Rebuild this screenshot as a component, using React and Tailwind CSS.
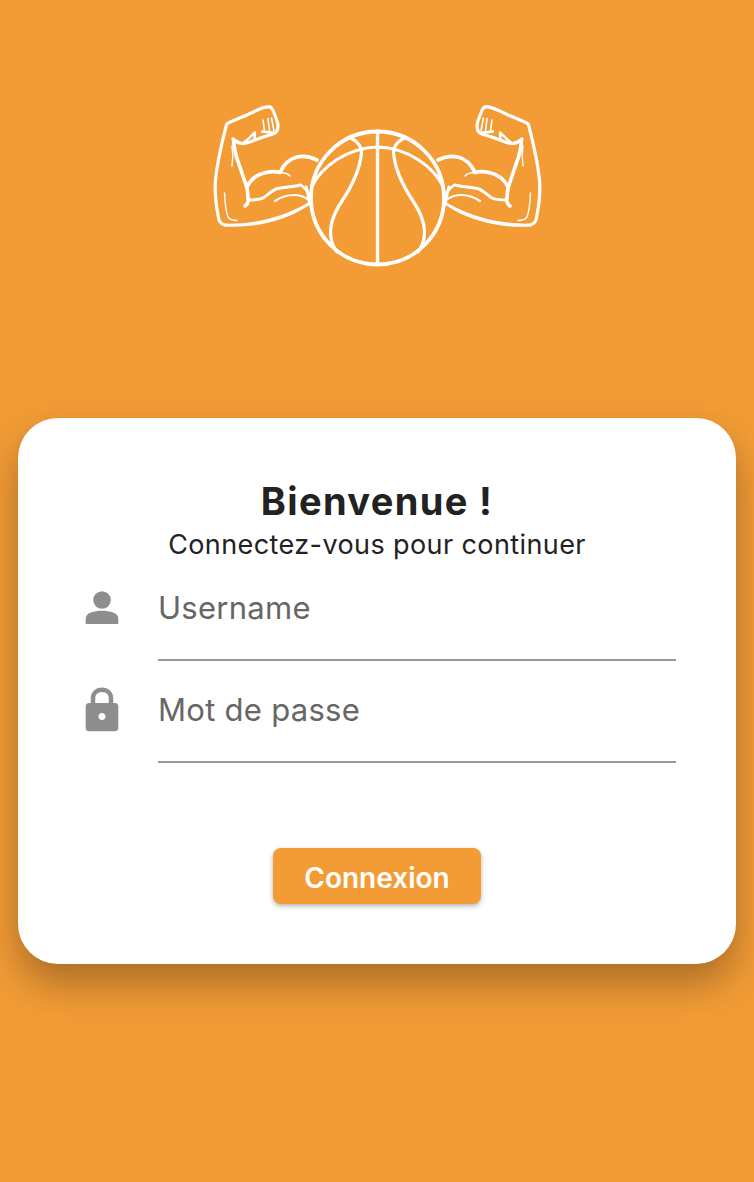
function Arm() {
  return (
    <g fill="none" stroke="#fff" strokeLinecap="round" strokeLinejoin="round">
      <path strokeWidth="3.200" d="M225 225C220 224 218.500 221 218.200 216C216 205 214.500 192 215.500 180C217 165 222 142 226.700 124C231 121 240 118 247 115C253 112 262 107 269 106.700C272 107 273 110 274 113C276 118 278 122 278 126C278 130 277 133 273 134C266 136 260 138 255 140C250 142 246 144 242 143.500C238 143 235 141 233 139" />
      <path fill="#fff" stroke="none" d="M311 204C296 214 282 220 262 224C248 227 234 227 224 226.500L225 223.500C234 224 248 223 261 220.500C280 216.500 296 210 309 202Z" />
      <path strokeWidth="3.600" d="M233.500 141C234 147 235 152 236.500 157L246.700 187C247.800 192 248 197 248.200 201C248 203 247 204.500 245 206" />
      <path strokeWidth="3.800" d="M246.700 187C251 179 258 174 266 172.500C271 171.500 276 171.500 280 172.500C283 166 289 159 297 157C304 155.500 311 157 317 160" />
      <path strokeWidth="1.600" d="M280 172.500C286 172.500 288 174 290 176" />
      <path strokeWidth="3" d="M248.200 200C254 200 259 200 263 198C268 195 271 191 276 189C284 187 294 187 300 185" />
      <path strokeWidth="2.200" d="M275 201C281 197 288 195 294 195C300 195 305 197 309 200" />
      <path strokeWidth="2.200" d="M301 185C305 188 308 192 310 196" />
      <path strokeWidth="3" d="M306 187C308 193 309 199 310 205" />
      <path strokeWidth="1.400" d="M224.500 193C225 203 226 212 228 217C230 220 233 220.500 237 220.500" />
      <path strokeWidth="1.400" d="M232 146C233 152 233 160 232 166" />
      <path strokeWidth="1.600" d="M263 120L264.500 131M268 118.500L269.500 131M271.500 118L274 131" />
      <path strokeWidth="2.400" d="M243 143C248 140 252 135 255 132.500C255 136 254 138 255 140M262 131.500C266 132 270 132.500 275 133" />
    </g>
  );
}

function Logo() {
  return (
    <svg viewBox="205 100 344 172" className="block h-[172px] w-[344px]">
      <Arm />
      <g transform="matrix(-1 0 0 1 755 0)">
        <Arm />
      </g>
      <g fill="none" stroke="#fff" strokeLinecap="round">
        <circle cx="377.500" cy="198" r="66.500" strokeWidth="3.800" />
        <path strokeWidth="3.400" d="M377.500 131V264" />
        <path strokeWidth="3.200" d="M312 186C322 167 346 148 377.500 147C409 148 433 167 443 186" />
        <path strokeWidth="3.200" d="M351 138C358 142 362 147 361.500 153C360 168 352 186 342 201C334 213 329 226 331 238C332 244 334 248 337 252" />
        <path strokeWidth="3.200" d="M404 138C397 142 393 147 393.500 153C395 168 403 186 413 201C421 213 426 226 424 238C423 244 421 248 418 252" />
      </g>
    </svg>
  );
}

function UserIcon() {
  return (
    <svg viewBox="0 0 34 36" className="mt-[5px] h-[36px] w-[34px] text-[#8e8e8e]" fill="currentColor">
      <circle cx="17" cy="10" r="8.800" />
      <path d="M.7 34V28.500C.7 23 9 20.800 17 20.800S33.300 23 33.300 28.500V34Z" />
    </svg>
  );
}

function LockIcon() {
  return (
    <svg viewBox="0 0 34 46" className="h-[46px] w-[34px] text-[#8e8e8e]">
      <path fill="none" stroke="currentColor" strokeWidth="4.500" d="M8 18V11.500C8 6 11.800 2.700 17 2.700S26 6 26 11.500V18" />
      <path fill="currentColor" fillRule="evenodd" d="M4 16H30C32 16 33.300 17.300 33.300 19.300V41C33.300 43 32 44.300 30 44.300H4C2 44.300 .7 43 .7 41V19.300C.7 17.300 2 16 4 16ZM17 26C15 26 13.500 27.500 13.500 29.500S15 33 17 33S20.500 31.500 20.500 29.500S19 26 17 26Z" />
    </svg>
  );
}

function Field({ icon, label }) {
  return (
    <div className="flex h-[102px] items-start">
      <div className="flex w-[73px] shrink-0 justify-start">{icon}</div>
      <div className="flex h-[76px] flex-1 items-start border-b-2 border-[#999999] pt-px text-[31px] leading-[44px] tracking-[0.28px] text-[#666666]">
        {label}
      </div>
    </div>
  );
}

export default function App() {
  return (
    <div className="flex h-[1182px] flex-col items-center overflow-hidden bg-[#f39c36] px-[18px] pt-[100px] font-['Inter',sans-serif]">
      <Logo />
      <main className="mt-[146px] flex h-[546px] w-full flex-col items-stretch rounded-[40px] bg-white px-[60px] pt-[60px] shadow-[0_20px_40px_rgba(0,0,0,0.3)]">
        <h1 className="text-center text-[38px] font-bold leading-[46px] tracking-[1.35px] text-[#222222]">Bienvenue !</h1>
        <p className="mt-[4px] text-center text-[27px] leading-[34px] tracking-[0.4px] text-[#222222]">Connectez-vous pour continuer</p>
        <div className="mt-[23px] flex flex-col pl-[7px]">
          <Field icon={<UserIcon />} label="Username" />
          <Field icon={<LockIcon />} label="Mot de passe" />
        </div>
        <button className="mx-auto mt-[59px] flex h-[56px] w-[208px] items-center justify-center rounded-[8px] bg-[#f39c36] pt-[3px] text-[28px] font-[560] text-white shadow-[0_2px_5px_rgba(0,0,0,0.3)]">
          Connexion
        </button>
      </main>
    </div>
  );
}
